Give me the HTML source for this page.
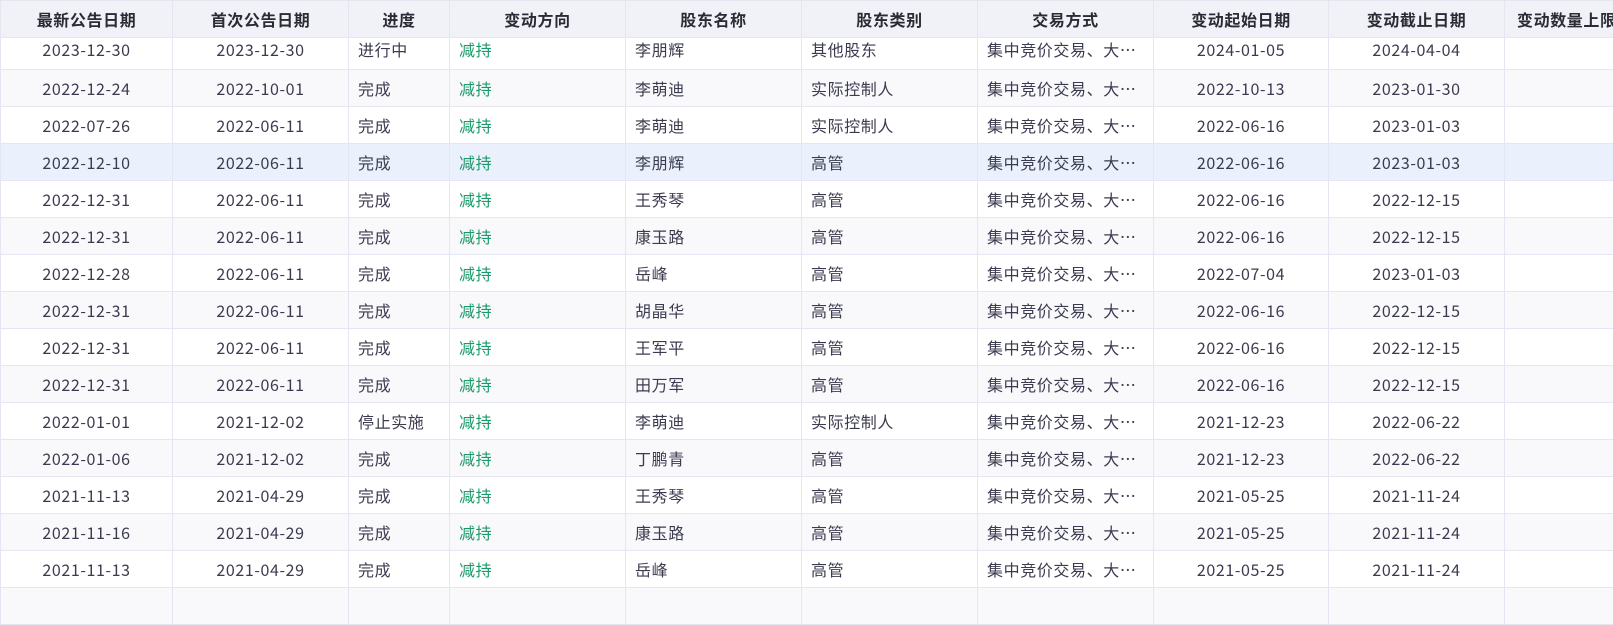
<!DOCTYPE html>
<html><head><meta charset="utf-8"><style>
body{margin:0;width:1613px;height:594px;overflow:hidden;background:#fff;font-family:"Noto Sans CJK SC","Liberation Sans",sans-serif;}
table{border-collapse:collapse;table-layout:fixed;width:1720px;position:absolute;left:0;top:0;}
th,td{border:1px solid #e6e6f2;white-space:nowrap;overflow:hidden;text-overflow:ellipsis;font-size:16px;letter-spacing:0.6px;color:#3b3b4f;padding:0 9px;line-height:20px;}
th{height:36px;background:#f1f1f8;font-weight:bold;color:#2b2b35;text-align:center;}
td{height:36px;}
tr.first td{height:30px;vertical-align:top;padding-top:1px;}
td.c{text-align:center;}
td.g{color:#1a9a6a;}
tr:nth-child(even) td{background:#f9f9fc;}
tr.hl td{background:#eaf1fd;}
</style></head><body>
<table>
<colgroup><col style="width:172px"><col style="width:176px"><col style="width:101px"><col style="width:176px"><col style="width:176px"><col style="width:176px"><col style="width:176px"><col style="width:175px"><col style="width:176px"><col style="width:216px"></colgroup>
<thead><tr><th>最新公告日期</th><th>首次公告日期</th><th>进度</th><th>变动方向</th><th>股东名称</th><th>股东类别</th><th>交易方式</th><th>变动起始日期</th><th>变动截止日期</th><th style="text-align:left;padding-left:12px">变动数量上限</th></tr></thead>
<tbody>
<tr class="first"><td class="c">2023-12-30</td><td class="c">2023-12-30</td><td>进行中</td><td class="g">减持</td><td>李朋辉</td><td>其他股东</td><td>集中竞价交易、大宗交易</td><td class="c">2024-01-05</td><td class="c">2024-04-04</td><td></td></tr>
<tr><td class="c">2022-12-24</td><td class="c">2022-10-01</td><td>完成</td><td class="g">减持</td><td>李萌迪</td><td>实际控制人</td><td>集中竞价交易、大宗交易</td><td class="c">2022-10-13</td><td class="c">2023-01-30</td><td></td></tr>
<tr><td class="c">2022-07-26</td><td class="c">2022-06-11</td><td>完成</td><td class="g">减持</td><td>李萌迪</td><td>实际控制人</td><td>集中竞价交易、大宗交易</td><td class="c">2022-06-16</td><td class="c">2023-01-03</td><td></td></tr>
<tr class="hl"><td class="c">2022-12-10</td><td class="c">2022-06-11</td><td>完成</td><td class="g">减持</td><td>李朋辉</td><td>高管</td><td>集中竞价交易、大宗交易</td><td class="c">2022-06-16</td><td class="c">2023-01-03</td><td></td></tr>
<tr><td class="c">2022-12-31</td><td class="c">2022-06-11</td><td>完成</td><td class="g">减持</td><td>王秀琴</td><td>高管</td><td>集中竞价交易、大宗交易</td><td class="c">2022-06-16</td><td class="c">2022-12-15</td><td></td></tr>
<tr><td class="c">2022-12-31</td><td class="c">2022-06-11</td><td>完成</td><td class="g">减持</td><td>康玉路</td><td>高管</td><td>集中竞价交易、大宗交易</td><td class="c">2022-06-16</td><td class="c">2022-12-15</td><td></td></tr>
<tr><td class="c">2022-12-28</td><td class="c">2022-06-11</td><td>完成</td><td class="g">减持</td><td>岳峰</td><td>高管</td><td>集中竞价交易、大宗交易</td><td class="c">2022-07-04</td><td class="c">2023-01-03</td><td></td></tr>
<tr><td class="c">2022-12-31</td><td class="c">2022-06-11</td><td>完成</td><td class="g">减持</td><td>胡晶华</td><td>高管</td><td>集中竞价交易、大宗交易</td><td class="c">2022-06-16</td><td class="c">2022-12-15</td><td></td></tr>
<tr><td class="c">2022-12-31</td><td class="c">2022-06-11</td><td>完成</td><td class="g">减持</td><td>王军平</td><td>高管</td><td>集中竞价交易、大宗交易</td><td class="c">2022-06-16</td><td class="c">2022-12-15</td><td></td></tr>
<tr><td class="c">2022-12-31</td><td class="c">2022-06-11</td><td>完成</td><td class="g">减持</td><td>田万军</td><td>高管</td><td>集中竞价交易、大宗交易</td><td class="c">2022-06-16</td><td class="c">2022-12-15</td><td></td></tr>
<tr><td class="c">2022-01-01</td><td class="c">2021-12-02</td><td>停止实施</td><td class="g">减持</td><td>李萌迪</td><td>实际控制人</td><td>集中竞价交易、大宗交易</td><td class="c">2021-12-23</td><td class="c">2022-06-22</td><td></td></tr>
<tr><td class="c">2022-01-06</td><td class="c">2021-12-02</td><td>完成</td><td class="g">减持</td><td>丁鹏青</td><td>高管</td><td>集中竞价交易、大宗交易</td><td class="c">2021-12-23</td><td class="c">2022-06-22</td><td></td></tr>
<tr><td class="c">2021-11-13</td><td class="c">2021-04-29</td><td>完成</td><td class="g">减持</td><td>王秀琴</td><td>高管</td><td>集中竞价交易、大宗交易</td><td class="c">2021-05-25</td><td class="c">2021-11-24</td><td></td></tr>
<tr><td class="c">2021-11-16</td><td class="c">2021-04-29</td><td>完成</td><td class="g">减持</td><td>康玉路</td><td>高管</td><td>集中竞价交易、大宗交易</td><td class="c">2021-05-25</td><td class="c">2021-11-24</td><td></td></tr>
<tr><td class="c">2021-11-13</td><td class="c">2021-04-29</td><td>完成</td><td class="g">减持</td><td>岳峰</td><td>高管</td><td>集中竞价交易、大宗交易</td><td class="c">2021-05-25</td><td class="c">2021-11-24</td><td></td></tr>
<tr><td class="c"></td><td class="c"></td><td></td><td></td><td></td><td></td><td></td><td></td><td></td><td></td></tr>
</tbody></table>
</body></html>
